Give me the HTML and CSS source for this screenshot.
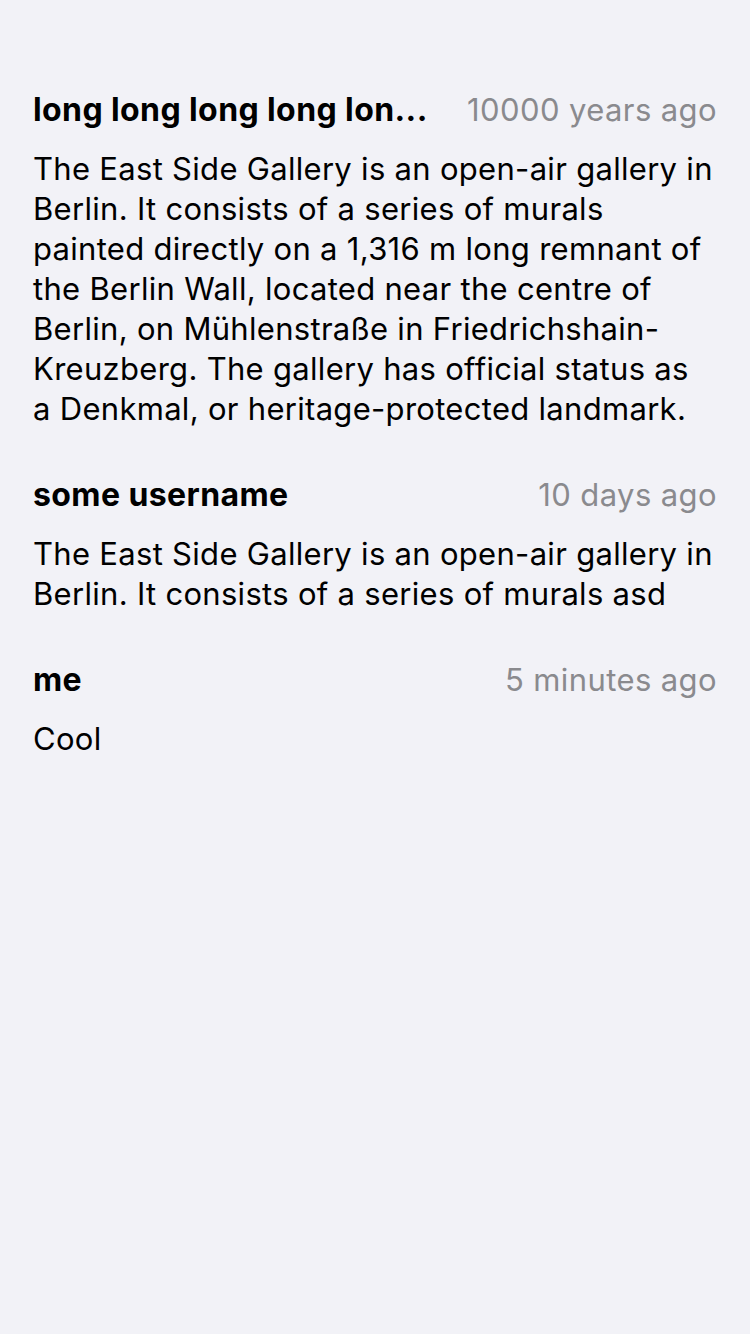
FILE: index.html
```html
<!DOCTYPE html>
<html lang="en">
<head>
<meta charset="utf-8">
<title>Comments</title>
<link rel="stylesheet" href="styles.css">
</head>
<body>
<main class="list">
  <article class="comment">
    <header class="head">
      <span class="user">long long long long lon...</span>
      <span class="time">10000 years ago</span>
    </header>
    <p class="body">The East Side Gallery is an open-air gallery in Berlin. It consists of a series of murals painted directly on a 1,316 m long remnant of the Berlin Wall, located near the centre of Berlin, on Mühlenstraße in Friedrichshain-Kreuzberg. The gallery has official status as a Denkmal, or heritage-protected landmark.</p>
  </article>
  <article class="comment">
    <header class="head">
      <span class="user">some username</span>
      <span class="time">10 days ago</span>
    </header>
    <p class="body">The East Side Gallery is an open-air gallery in Berlin. It consists of a series of murals asd</p>
  </article>
  <article class="comment">
    <header class="head">
      <span class="user">me</span>
      <span class="time">5 minutes ago</span>
    </header>
    <p class="body">Cool</p>
  </article>
</main>
</body>
</html>
```
FILE: styles.css
```css
html, body {
  margin: 0;
  padding: 0;
  background: #f2f2f7;
}
body {
  font-family: Inter, "Liberation Sans", sans-serif;
  color: #000;
  width: 750px;
  min-height: 1334px;
}
.list {
  padding: 90px 33px 0 33px;
  display: flex;
  flex-direction: column;
  gap: 46px;
}
.comment {
  display: flex;
  flex-direction: column;
  gap: 19px;
}
.head {
  display: flex;
  align-items: center;
  gap: 24px;
  line-height: 40px;
}
.user {
  font-weight: 700;
  white-space: nowrap;
  font-size: 32px;
  letter-spacing: 0.4px;
}
.time {
  margin-left: auto;
  color: #8a8a8e;
  white-space: nowrap;
  font-size: 31px;
  letter-spacing: 0.4px;
}
.body {
  margin: 0;
  padding-right: 4px;
  font-size: 31px;
  line-height: 40px;
  letter-spacing: 0.3px;
}
```
